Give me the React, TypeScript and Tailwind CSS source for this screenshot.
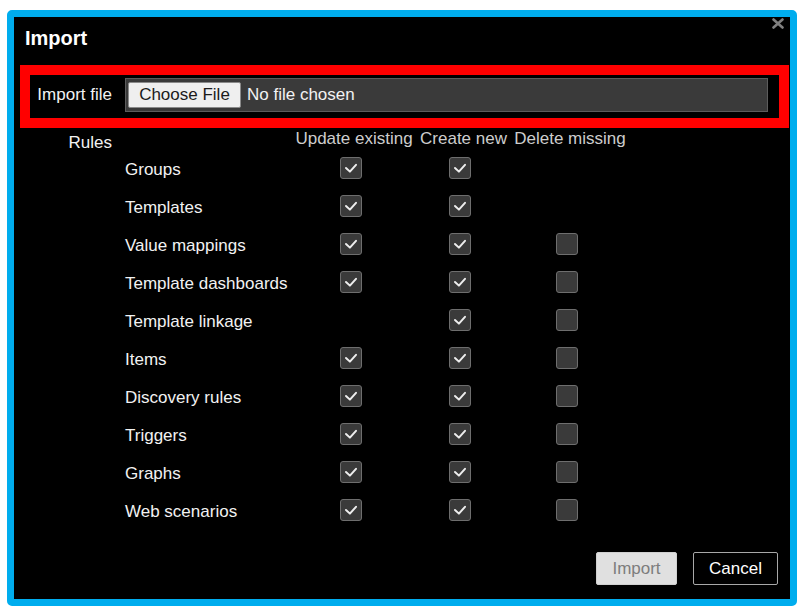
import { ReactNode } from "react";

type Rule = {
  name: string;
  update?: boolean;
  create?: boolean;
  remove?: boolean;
};

const rules: Rule[] = [
  { name: "Groups", update: true, create: true },
  { name: "Templates", update: true, create: true },
  { name: "Value mappings", update: true, create: true, remove: false },
  { name: "Template dashboards", update: true, create: true, remove: false },
  { name: "Template linkage", create: true, remove: false },
  { name: "Items", update: true, create: true, remove: false },
  { name: "Discovery rules", update: true, create: true, remove: false },
  { name: "Triggers", update: true, create: true, remove: false },
  { name: "Graphs", update: true, create: true, remove: false },
  { name: "Web scenarios", update: true, create: true, remove: false },
];

const Checkbox = ({ checked }: { checked: boolean }) => (
  <span className="flex h-[22px] w-[22px] items-center justify-center rounded-[3px] border border-[#6e6e6e] bg-[#3a3a3a]">
    {checked ? (
      <svg width="22" height="22" viewBox="0 0 22 22" fill="none">
        <polyline
          points="5.5,11 9.8,15 16.5,7.5"
          stroke="#ededed"
          strokeWidth="2.2"
          strokeLinecap="round"
          strokeLinejoin="round"
        />
      </svg>
    ) : null}
  </span>
);

// a cell in one of the three option columns; undefined = no checkbox
const Cell = ({ value }: { value?: boolean }) => (
  <div className="flex items-center justify-center pr-[7px]">
    {value === undefined ? null : <Checkbox checked={value} />}
  </div>
);

const FormRow = ({ label, children, labelClass = "" }: { label: string; children: ReactNode; labelClass?: string }) => (
  <div className="grid grid-cols-[98px_1fr] gap-x-[13px]">
    <div className={`text-right text-[#f2f2f2] ${labelClass}`}>{label}</div>
    <div>{children}</div>
  </div>
);

export default function App() {
  return (
    <div
      className="h-[614px] w-[804px] bg-white pl-[7px] pt-[10px] text-[17px]"
      style={{ fontFamily: '"Liberation Sans", Arial, sans-serif' }}
    >
      <div className="relative flex h-[596px] w-[790px] flex-col rounded-[5px] border-[7px] border-[#00adee] bg-black">
        {/* close */}
        <button className="absolute right-[6px] top-[1px]">
          <svg width="12" height="11" viewBox="0 0 12 11">
            <path d="M1.5 1.5 L10.5 9.5 M10.5 1.5 L1.5 9.5" stroke="#808080" strokeWidth="2.6" strokeLinecap="round" />
          </svg>
        </button>

        {/* START: header */}
        <h1 className="pl-[11px] pt-[9px] text-[20px] font-bold leading-[24px] text-white">Import</h1>
        {/* END: header */}

        {/* START: form */}
        <div className="mt-[28px]">
          <FormRow label="Import file" labelClass="flex h-[34px] items-center justify-end">
            <div className="flex h-[34px] w-[643px] items-center border border-[#5c5c5c] bg-[#3a3a3a] pl-[2px]">
              <span className="flex h-[26px] w-[113px] items-center justify-center rounded-[2px] border border-[#8a8a8a] bg-[#efefef] text-[#1b1b1b]">
                Choose File
              </span>
              <span className="ml-[6px] text-[#f2f2f2]">No file chosen</span>
            </div>
          </FormRow>

          <div className="mt-[16px]">
            <FormRow label="Rules" labelClass="pt-[4px] leading-[21px]">
              <div className="grid grid-cols-[167px_124px_95px_118px]">
                <div />
                <div className="h-[21px] text-center leading-[21px] text-[#cdcdcd]">Update existing</div>
                <div className="h-[21px] text-center leading-[21px] text-[#cdcdcd]">Create new</div>
                <div className="h-[21px] text-center leading-[21px] text-[#cdcdcd]">Delete missing</div>
                {rules.map((rule) => (
                  <div key={rule.name} className="contents">
                    <div className="flex h-[38px] items-center pt-[3px] text-[#f2f2f2]">{rule.name}</div>
                    <Cell value={rule.update} />
                    <Cell value={rule.create} />
                    <Cell value={rule.remove} />
                  </div>
                ))}
              </div>
            </FormRow>
          </div>
        </div>
        {/* END: form */}

        {/* START: footer */}
        <div className="mt-[23px] flex justify-end gap-[16px] pr-[12px]">
          <button className="h-[33px] w-[81px] rounded-[2px] border border-[#d0d0d0] bg-[#e0e0e0] text-[#7d7d7d]">Import</button>
          <button className="h-[33px] w-[85px] rounded-[2px] border border-[#a8a8a8] bg-black text-white">Cancel</button>
        </div>
        {/* END: footer */}

        {/* annotation box round the file row */}
        <div className="pointer-events-none absolute left-[6px] top-[48px] h-[63px] w-[769px] border-[10px] border-[#ff0000]" />
      </div>
    </div>
  );
}
